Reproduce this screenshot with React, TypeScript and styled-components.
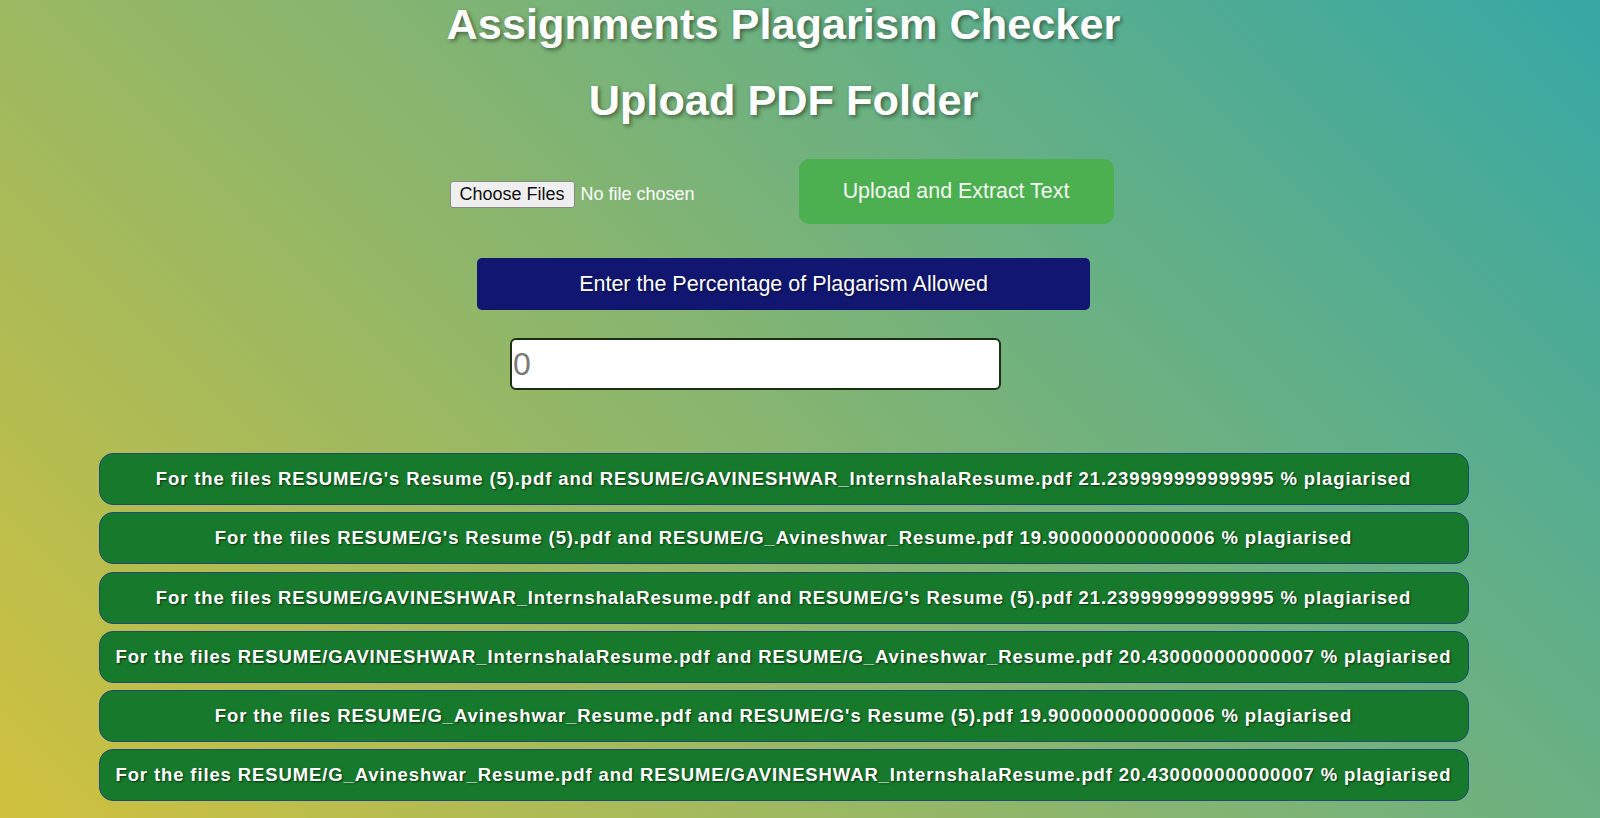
import React from "react";
import styled, { createGlobalStyle } from "styled-components";

const GlobalStyle = createGlobalStyle`
  html, body {
    margin: 0;
    padding: 0;
    height: 100%;
  }
  body {
    font-family: "Liberation Sans", Arial, sans-serif;
    background: linear-gradient(45deg, #d0c13e 0%, #36a8a5 100%);
    color: #ffffff;
  }
`;

const Page = styled.div`
  width: 1567px;
  display: flex;
  flex-direction: column;
  align-items: center;
  padding-bottom: 16px;
`;

const Title = styled.h1<{ $gap?: number }>`
  margin: ${(p) => p.$gap ?? 0}px 0 0;
  font-size: 43.3px;
  line-height: 49px;
  font-weight: 700;
  color: #ffffff;
  text-shadow: 2px 2px 4px rgba(0, 0, 0, 0.45);
  text-align: center;
`;

const UploadRow = styled.div`
  margin-top: 34px;
  display: flex;
  align-items: center;
  gap: 49px;
  padding-right: 4px;
`;

const FileInput = styled.input`
  width: 300px;
  font-family: "Liberation Sans", Arial, sans-serif;
  font-size: 18px;
  color: #ffffff;
  margin-top: 5px;

  &::file-selector-button {
    font-family: "Liberation Sans", Arial, sans-serif;
    font-size: 18px;
    color: #111111;
    background: #efefef;
    border: 1px solid #8a8a8a;
    border-radius: 3px;
    padding: 2px 9px;
    margin-right: 6px;
  }
`;

const UploadButton = styled.button`
  width: 315px;
  height: 65px;
  border: none;
  border-radius: 10px;
  background: #4caf50;
  color: #f4f8f2;
  font-family: "Liberation Sans", Arial, sans-serif;
  font-size: 21.4px;
  cursor: pointer;
`;

const PercentLabel = styled.div`
  margin-top: 34px;
  width: 613px;
  height: 52px;
  box-sizing: border-box;
  display: flex;
  align-items: center;
  justify-content: center;
  background: #111671;
  border-radius: 5px;
  font-size: 21.5px;
  color: #ffffff;
  text-shadow: 1px 1px 2px rgba(0, 0, 0, 0.5);
`;

const PercentInput = styled.input`
  margin-top: 28px;
  margin-right: 56px;
  width: 491px;
  height: 52px;
  box-sizing: border-box;
  border: 2px solid #1d2e17;
  border-radius: 6px;
  background: #ffffff;
  padding: 0 1px;
  font-family: "Liberation Sans", Arial, sans-serif;
  font-size: 32px;
  color: #222222;
  outline: none;

  &::placeholder {
    color: #7a7a7a;
  }
`;

const ResultList = styled.div`
  margin-top: 63px;
  display: flex;
  flex-direction: column;
  gap: 7.3px;
`;

const ResultRow = styled.div`
  width: 1370px;
  height: 52px;
  box-sizing: border-box;
  display: flex;
  align-items: center;
  justify-content: center;
  background: #17792b;
  border: 1.5px solid #1e4a78;
  border-radius: 14px;
  font-size: 18.5px;
  font-weight: 700;
  letter-spacing: 0.88px;
  color: #ffffff;
  text-shadow: 1px 1px 2px rgba(0, 0, 0, 0.6);
  white-space: nowrap;
`;

const results = [
  "For the files RESUME/G's Resume (5).pdf and RESUME/GAVINESHWAR_InternshalaResume.pdf 21.239999999999995 % plagiarised",
  "For the files RESUME/G's Resume (5).pdf and RESUME/G_Avineshwar_Resume.pdf 19.900000000000006 % plagiarised",
  "For the files RESUME/GAVINESHWAR_InternshalaResume.pdf and RESUME/G's Resume (5).pdf 21.239999999999995 % plagiarised",
  "For the files RESUME/GAVINESHWAR_InternshalaResume.pdf and RESUME/G_Avineshwar_Resume.pdf 20.430000000000007 % plagiarised",
  "For the files RESUME/G_Avineshwar_Resume.pdf and RESUME/G's Resume (5).pdf 19.900000000000006 % plagiarised",
  "For the files RESUME/G_Avineshwar_Resume.pdf and RESUME/GAVINESHWAR_InternshalaResume.pdf 20.430000000000007 % plagiarised",
];

export default function App() {
  return (
    <>
      <GlobalStyle />
      <Page>
        <Title>Assignments Plagarism Checker</Title>
        <Title $gap={27}>Upload PDF Folder</Title>
        <UploadRow>
          <FileInput type="file" multiple />
          <UploadButton type="button">Upload and Extract Text</UploadButton>
        </UploadRow>
        <PercentLabel>Enter the Percentage of Plagarism Allowed</PercentLabel>
        <PercentInput type="number" placeholder="0" />
        <ResultList>
          {results.map((r, i) => (
            <ResultRow key={i}>{r}</ResultRow>
          ))}
        </ResultList>
      </Page>
    </>
  );
}
